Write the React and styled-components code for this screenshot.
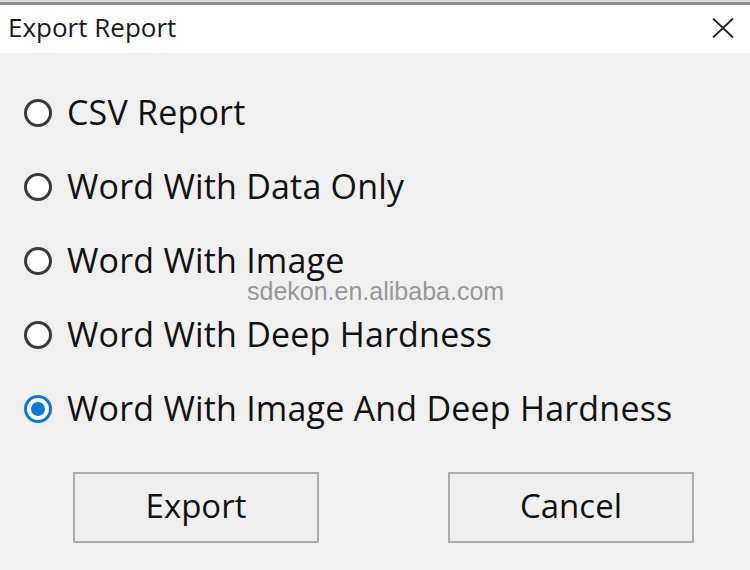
import React, { useState } from "react";
import styled, { createGlobalStyle } from "styled-components";

const GlobalStyle = createGlobalStyle`
  html, body {
    margin: 0;
    padding: 0;
    background: #f0f0f0;
  }
  * { box-sizing: border-box; }
`;

const Window = styled.div`
  position: relative;
  width: 750px;
  height: 570px;
  display: flex;
  flex-direction: column;
  background: #f0f0f0;
  font-family: "Open Sans", "Noto Sans", sans-serif;
  color: #111;
  overflow: hidden;
`;

const TopEdge = styled.div`
  height: 5px;
  background: #e4e4e4;
  border-top: 1px solid #d0d0d0;
  border-bottom: 3px solid #8c8c8c;
`;

const TitleBar = styled.div`
  height: 48px;
  background: #ffffff;
  display: flex;
  align-items: center;
  justify-content: space-between;
  padding: 0 15px 0 8px;
`;

const Title = styled.div`
  font-size: 26px;
  line-height: 1;
  color: #1a1a1a;
  margin-top: -4px;
`;

const CloseButton = styled.button`
  width: 24px;
  height: 24px;
  padding: 0;
  border: none;
  background: transparent;
  display: flex;
  align-items: center;
  justify-content: center;
  margin-top: -2px;
`;

const Body = styled.div`
  flex: 1;
  display: flex;
  flex-direction: column;
  padding-top: 23px;
`;

const OptionList = styled.div`
  display: flex;
  flex-direction: column;
`;

const OptionRow = styled.label`
  height: 74px;
  display: flex;
  align-items: center;
  padding-left: 24px;
  gap: 15px;
  cursor: default;
`;

const RadioCircle = styled.span`
  width: 28px;
  height: 28px;
  border-radius: 50%;
  flex: none;
  background: #ffffff;
  border: 3px solid ${(p) => (p.$checked ? "#0a78d6" : "#3a3a3a")};
  display: flex;
  align-items: center;
  justify-content: center;
  &::after {
    content: "";
    display: ${(p) => (p.$checked ? "block" : "none")};
    width: 14px;
    height: 14px;
    border-radius: 50%;
    background: #0a78d6;
  }
`;

const OptionLabel = styled.span`
  font-size: 34px;
  line-height: 1;
  letter-spacing: 0.2px;
  color: #111;
  margin-top: -3px;
  white-space: nowrap;
`;

const ButtonRow = styled.div`
  margin-top: 26px;
  display: flex;
  padding-left: 73px;
  gap: 129px;
`;

const DialogButton = styled.button`
  width: 246px;
  height: 71px;
  background: #efefef;
  border: 2px solid #adadad;
  font-family: "Open Sans", "Noto Sans", sans-serif;
  font-size: 33px;
  color: #111;
  padding: 0 0 4px 0;
  display: flex;
  align-items: center;
  justify-content: center;
`;

const Watermark = styled.div`
  position: absolute;
  left: 247px;
  top: 279px;
  font-family: "Liberation Sans", Arial, sans-serif;
  font-size: 25px;
  line-height: 1;
  color: rgba(120, 120, 120, 0.75);
  pointer-events: none;
`;

const options = [
  "CSV Report",
  "Word With Data Only",
  "Word With Image",
  "Word With Deep Hardness",
  "Word With Image And Deep Hardness",
];

export default function App() {
  const [selected, setSelected] = useState(4);
  return (
    <>
      <GlobalStyle />
      <Window>
        <TopEdge />
        <TitleBar>
          <Title>Export Report</Title>
          <CloseButton aria-label="Close">
            <svg width="22" height="20" viewBox="0 0 22 20">
              <path d="M1 0.5 L21 19.5 M21 0.5 L1 19.5" stroke="#222" strokeWidth="1.8" fill="none" />
            </svg>
          </CloseButton>
        </TitleBar>
        <Body>
          <OptionList>
            {options.map((o, i) => (
              <OptionRow key={o} onClick={() => setSelected(i)}>
                <RadioCircle $checked={selected === i} />
                <OptionLabel>{o}</OptionLabel>
              </OptionRow>
            ))}
          </OptionList>
          <ButtonRow>
            <DialogButton>Export</DialogButton>
            <DialogButton>Cancel</DialogButton>
          </ButtonRow>
        </Body>
        <Watermark>sdekon.en.alibaba.com</Watermark>
      </Window>
    </>
  );
}
